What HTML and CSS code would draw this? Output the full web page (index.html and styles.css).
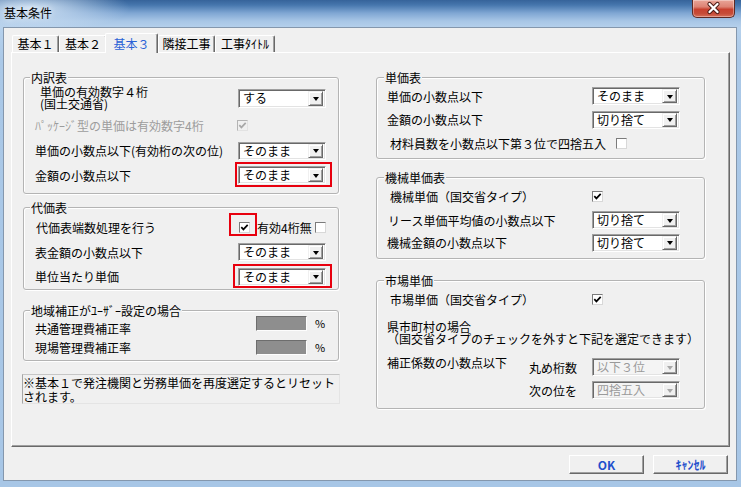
FILE: index.html
```html
<!DOCTYPE html>
<html lang="ja">
<head>
<meta charset="utf-8">
<title>基本条件</title>
<link rel="stylesheet" href="styles.css">
</head>
<body>
<div class="window">
  <div class="titlebar">
    <div class="title">基本条件</div>
    <div class="close">
      <svg width="41" height="17" viewBox="0 0 41 17"><path d="M16.5 4 L24.5 12 M24.5 4 L16.5 12" stroke="#4a1a14" stroke-width="4.2" stroke-linecap="round"/><path d="M16.5 4 L24.5 12 M24.5 4 L16.5 12" stroke="#fff" stroke-width="2.3" stroke-linecap="round"/></svg>
    </div>
  </div>
  <div class="client">
    <div class="tabs">
      <div class="tab w1">基本１</div>
      <div class="tab w2">基本２</div>
      <div class="tab w3 active">基本３</div>
      <div class="tab w4">隣接工事</div>
      <div class="tab w5">工事ﾀｲﾄﾙ</div>
    </div>
    <div class="panel">
      <div class="col col-left">
        <div class="group gl1">
          <div class="legend">内訳表</div>
          <div class="row r28">
            <div class="label indent"><div class="line">単価の有効数字４桁</div><div class="line">(国土交通省)</div></div>
            <div class="combo tall"><span class="val">する</span><span class="drop"></span></div>
          </div>
          <div class="row r26">
            <div class="label disabled">ﾊﾟｯｹｰｼﾞ型の単価は有効数字4桁</div>
            <span class="cb dis shift-l"><svg width="9" height="9" viewBox="0 0 9 9"><path d="M1.3 4.2 L3.4 6.4 L7.7 1.9" fill="none" stroke="currentColor" stroke-width="1.7"/></svg></span>
          </div>
          <div class="row r25">
            <div class="label">単価の小数点以下(有効桁の次の位)</div>
            <div class="combo"><span class="val">そのまま</span><span class="drop"></span></div>
          </div>
          <div class="row r24">
            <div class="label">金額の小数点以下</div>
            <div class="combo hl hl1"><span class="val">そのまま</span><span class="drop"></span></div>
          </div>
        </div>

        <div class="group gl2">
          <div class="legend">代価表</div>
          <div class="row r26">
            <div class="label pl1">代価表端数処理を行う</div>
            <div class="ctl">
              <span class="cb hl hl2 shift-r"><svg width="9" height="9" viewBox="0 0 9 9"><path d="M1.3 4.2 L3.4 6.4 L7.7 1.9" fill="none" stroke="currentColor" stroke-width="1.7"/></svg></span>
              <span class="inline-label">有効4桁無</span>
              <span class="cb tight"></span>
            </div>
          </div>
          <div class="row r24">
            <div class="label">表金額の小数点以下</div>
            <div class="combo"><span class="val">そのまま</span><span class="drop"></span></div>
          </div>
          <div class="row r25">
            <div class="label">単位当たり単価</div>
            <div class="combo hl hl3"><span class="val">そのまま</span><span class="drop"></span></div>
          </div>
        </div>

        <div class="group gl3">
          <div class="legend">地域補正がﾕｰｻﾞｰ設定の場合</div>
          <div class="row rate r20">
            <div class="label lab-a">共通管理費補正率</div>
            <span class="ratebox box-a"></span>
            <span class="pct">%</span>
          </div>
          <div class="row rate r21">
            <div class="label lab-b">現場管理費補正率</div>
            <span class="ratebox box-b"></span>
            <span class="pct pct-b">%</span>
          </div>
        </div>

        <div class="note"><div class="line l14">※基本１で発注機関と労務単価を再度選定するとリセット</div><div class="line l14">されます。</div></div>
      </div>

      <div class="col col-right">
        <div class="group gr1">
          <div class="legend">単価表</div>
          <div class="row r24">
            <div class="label">単価の小数点以下</div>
            <div class="combo"><span class="val">そのまま</span><span class="drop"></span></div>
          </div>
          <div class="row r23">
            <div class="label">金額の小数点以下</div>
            <div class="combo"><span class="val">切り捨て</span><span class="drop"></span></div>
          </div>
          <div class="row r24">
            <div class="label-free pl3">材料員数を小数点以下第３位で四捨五入</div>
            <span class="cb gap10"></span>
          </div>
        </div>

        <div class="group gr2">
          <div class="legend">機械単価表</div>
          <div class="row r25">
            <div class="label pl3">機械単価（国交省タイプ）</div>
            <span class="cb"><svg width="9" height="9" viewBox="0 0 9 9"><path d="M1.3 4.2 L3.4 6.4 L7.7 1.9" fill="none" stroke="currentColor" stroke-width="1.7"/></svg></span>
          </div>
          <div class="row r22">
            <div class="label pl1">リース単価平均値の小数点以下</div>
            <div class="combo"><span class="val">切り捨て</span><span class="drop"></span></div>
          </div>
          <div class="row r23">
            <div class="label">機械金額の小数点以下</div>
            <div class="combo"><span class="val">切り捨て</span><span class="drop"></span></div>
          </div>
        </div>

        <div class="group gr3">
          <div class="legend">市場単価</div>
          <div class="row r24">
            <div class="label pl3">市場単価（国交省タイプ）</div>
            <span class="cb"><svg width="9" height="9" viewBox="0 0 9 9"><path d="M1.3 4.2 L3.4 6.4 L7.7 1.9" fill="none" stroke="currentColor" stroke-width="1.7"/></svg></span>
          </div>
          <div class="pref-note"><div class="line">県市町村の場合</div><div class="line">（国交省タイプのチェックを外すと下記を選定できます）</div></div>
          <div class="round">
            <div class="round-label">補正係数の小数点以下</div>
            <div class="round-rows">
              <div class="row r22">
                <span class="sublabel">丸め桁数</span>
                <div class="combo disabled"><span class="val">以下３位</span><span class="drop"></span></div>
              </div>
              <div class="row r24">
                <span class="sublabel">次の位を</span>
                <div class="combo disabled"><span class="val">四捨五入</span><span class="drop"></span></div>
              </div>
            </div>
          </div>
        </div>
      </div>
    </div>
    <div class="buttons">
      <div class="btn">OK</div>
      <div class="btn">ｷｬﾝｾﾙ</div>
    </div>
  </div>
</div>
</body>
</html>
```

FILE: styles.css
```css
* { box-sizing: border-box; margin: 0; padding: 0; }
html, body { width: 741px; height: 487px; overflow: hidden; }
body {
  font-family: "Noto Sans CJK JP", "Noto Sans", sans-serif;
  font-size: 12px;
  line-height: 13px;
  color: #000;
  background: #aac8e7;
}

.window {
  width: 741px;
  height: 487px;
  display: flex;
  flex-direction: column;
  background:
    radial-gradient(ellipse 100px 24px at 30px 8px, rgba(214,230,246,.95), rgba(214,230,246,0) 100%),
    linear-gradient(180deg, #36639a 0, #4676ad 5px, #7fa6d3 13px, #a8c6e6 21px, #b6d1ec 28px, #aac8e7 60px, #a7c6e6 100%);
}

/* title bar */
.titlebar { height: 27px; flex: none; display: flex; align-items: flex-start; }
.title { padding: 6px 0 0 4px; line-height: 14px; text-shadow: 0 0 6px rgba(255,255,255,.9); }
.close {
  margin-left: auto;
  margin-right: 6px;
  width: 43px;
  height: 18px;
  border: 1px solid #5e2a24;
  border-top: none;
  border-radius: 0 0 5px 5px;
  background: linear-gradient(180deg, #e9a598 0, #dd8374 40%, #c8412f 55%, #c64c38 80%, #d6705a 100%);
  box-shadow: inset 0 0 0 1px rgba(255,255,255,.35);
  display: flex;
  align-items: center;
  justify-content: center;
}

/* client */
.client {
  flex: 1;
  margin: 0 4px 6px 3px;
  background: #f0f0f0;
  border: 1px solid #8497ad;
  display: flex;
  flex-direction: column;
}

/* tabs */
.tabs {
  height: 19px;
  margin-top: 5px;
  padding-left: 8px;
  display: flex;
  align-items: flex-start;
  position: relative;
  z-index: 1;
}
.tab {
  height: 17px;
  margin-top: 2px;
  text-align: center;
  line-height: 16px;
  white-space: nowrap;
  background: #f0f0f0;
  border-top: 1px solid #fff;
  border-left: 1px solid #fff;
  border-right: 1px solid #696969;
  box-shadow: inset -1px 0 #a0a0a0;
  border-radius: 2px 2px 0 0;
}
.tab.active { height: 20px; margin-top: 0; line-height: 19px; color: #2a62d6; }
.w1 { width: 47px; }
.w2 { width: 48px; }
.w3 { width: 53px; margin-left: -2px; }
.w4 { width: 57px; }
.w5 { width: 60px; }

/* panel */
.panel {
  width: 719px;
  height: 395px;
  margin-left: 7px;
  border: 1px solid;
  border-color: #fff #696969 #696969 #fff;
  box-shadow: inset -1px -1px #a0a0a0;
  display: flex;
  align-items: flex-start;
  gap: 37px;
  padding: 24px 0 0 11px;
}
.col { display: flex; flex-direction: column; }
.col-left { width: 316px; }
.col-right { width: 329px; }

/* group boxes */
.group {
  border: 1px solid #b4b4b4;
  border-radius: 3px;
  box-shadow: 1px 1px 0 #fff, inset 1px 1px 0 #fff;
}
.col-left .group { padding-left: 11px; }
.col-right .group { padding-left: 10px; }
.legend {
  width: max-content;
  height: 13px;
  margin-top: -7px;
  padding: 0 1px;
  background: #f0f0f0;
  line-height: 13px;
}
.col-left .legend { margin-left: -5px; }
.col-right .legend { margin-left: -3px; }

.gl1 { padding-bottom: 6px; }
.gl2 { margin-top: 13px; }
.gl3 { margin-top: 20px; padding-bottom: 2px; }
.gr1 { padding-bottom: 3px; }
.gr2 { margin-top: 18px; padding-bottom: 4px; }
.gr3 { margin-top: 21px; padding-bottom: 6px; }

/* rows */
.row { display: flex; align-items: center; }
.r20 { height: 20px; }
.r21 { height: 21px; }
.r22 { height: 22px; }
.r23 { height: 23px; }
.r24 { height: 24px; }
.r25 { height: 25px; }
.r26 { height: 26px; }
.r28 { height: 28px; }

.label { flex: none; white-space: nowrap; line-height: 13px; }
.line { height: 12px; line-height: 12px; white-space: nowrap; }
.line.l14 { height: 14px; line-height: 14px; }
.col-left .label { width: 203px; }
.col-right .label { width: 205px; }
.label-free { white-space: nowrap; }
.indent { padding-left: 5px; }
.pl1 { padding-left: 1px; }
.pl3 { padding-left: 3px; }
.disabled { color: #9c9c9c; }

/* combo boxes */
.combo {
  width: 88px;
  height: 18px;
  flex: none;
  display: flex;
  align-items: center;
  background: #fff;
  border: 1px solid;
  border-color: #a0a0a0 #fff #fff #a0a0a0;
  box-shadow: inset 1px 1px #696969, inset -1px -1px #e3e3e3;
  padding: 1px 2px 1px 1px;
}
.combo.tall { height: 19px; }
.combo .val { flex: 1; padding-left: 3px; line-height: 14px; white-space: nowrap; }
.combo .drop {
  width: 15px;
  height: 14px;
  flex: none;
  display: flex;
  align-items: center;
  justify-content: center;
  background: #f0f0f0;
  border: 1px solid;
  border-color: #f0f0f0 #696969 #696969 #f0f0f0;
  box-shadow: inset 1px 1px #fff, inset -1px -1px #a0a0a0;
}
.combo.tall .drop { height: 15px; }
.combo .drop::after {
  content: "";
  border-left: 3.5px solid transparent;
  border-right: 3.5px solid transparent;
  border-top: 4px solid #000;
  margin-top: 1px;
}
.combo.disabled { background: #f4f4f4; }
.combo.disabled .val { color: #9a9a9a; }
.combo.disabled .drop::after { border-top-color: #a8a8a8; }

/* checkboxes */
.cb {
  width: 11px;
  height: 11px;
  flex: none;
  display: flex;
  align-items: center;
  justify-content: center;
  background: #fff;
  color: #000;
  border: 1px solid;
  border-color: #7b7b7b #d8d8d8 #d8d8d8 #7b7b7b;
}
.cb svg { display: block; }
.cb.dis { background: #f0f0f0; color: #a8a8a8; border-color: #b4b4b4 #e2e2e2 #e2e2e2 #b4b4b4; }
.shift-l { margin-left: -1px; }
.shift-r { margin-left: 1px; }
.gap10 { margin-left: 10px; }
.ctl { display: flex; align-items: center; }
.inline-label { margin-left: 7px; white-space: nowrap; }
.tight { margin-left: 3px; }

/* red annotation boxes */
.hl { position: relative; }
.hl::after {
  content: "";
  position: absolute;
  border: 2px solid #e8000e;
  pointer-events: none;
}
.hl1::after { left: -4px; right: -7px; top: -5px; bottom: -4px; }
.hl2::after { left: -11px; right: -8px; top: -10px; bottom: -4px; }
.hl3::after { left: -6px; right: -7px; top: -5px; bottom: -3px; }

/* rate boxes */
.rate { align-items: flex-start; }
.lab-a { margin-top: 5px; }
.lab-b { margin-top: 4px; }
.ratebox {
  width: 51px;
  height: 15px;
  flex: none;
  margin-left: 18px;
  background: #8e8e8e;
  border: 1px solid;
  border-color: #6d6d6d #fdfdfd #fdfdfd #6d6d6d;
}
.box-a { margin-top: -1px; }
.box-b { margin-top: 3px; }
.pct { margin-left: 8px; font-size: 11px; line-height: 13px; }
.pct-b { margin-top: 4px; }

/* note */
.note {
  margin: 13px 0 0 -1px;
  width: 318px;
  height: 30px;
  border: 1px solid;
  border-color: #c6c6c6 #e4e4e4 #e4e4e4 #a6a6a6;
  padding-top: 1px;
}

/* market price block */
.pref-note { margin-top: 9px; padding-top: 1px; height: 26px; }
.round { display: flex; margin-top: 10px; }
.round-label { width: 142px; flex: none; line-height: 13px; white-space: nowrap; }
.round-rows { display: flex; flex-direction: column; }
.sublabel { width: 63px; flex: none; white-space: nowrap; }

/* buttons */
.buttons {
  display: flex;
  justify-content: flex-end;
  gap: 9px;
  margin-top: 8px;
  padding-right: 8px;
}
.btn {
  width: 75px;
  height: 19px;
  background: #f0f0f0;
  border: 1px solid;
  border-color: #fff #696969 #696969 #fff;
  box-shadow: inset -1px -1px #a0a0a0;
  color: #1f4fcc;
  font-weight: bold;
  line-height: 17px;
  text-align: center;
}
```
